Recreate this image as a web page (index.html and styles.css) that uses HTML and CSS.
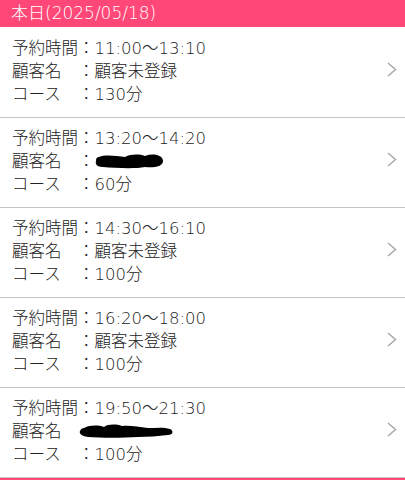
FILE: index.html
```html
<!DOCTYPE html>
<html lang="ja">
<head>
<meta charset="utf-8">
<link rel="stylesheet" href="styles.css">
</head>
<body>
<div class="header">本日(2025/05/18)</div>
<ul class="list">
  <li class="item">
    <div class="info">
      <span class="label">予約時間</span><span class="value">：11:00〜13:10</span>
      <span class="label">顧客名</span><span class="value">：顧客未登録</span>
      <span class="label">コース</span><span class="value">：130分</span>
    </div>
    <svg class="chev" viewBox="0 0 12 16"><path d="M2 1.5 L9.5 8 L2 14.5" /></svg>
  </li>
  <li class="item">
    <div class="info">
      <span class="label">予約時間</span><span class="value">：13:20〜14:20</span>
      <span class="label">顧客名</span><span class="value">：<svg class="blob blob-a" viewBox="0 0 70 16"><path d="M4 4 C10 1 22 3 30 4 C36 1 44 1 50 3 C58 0 68 2 68 8 C68 14 58 15 50 14 C40 16 20 15 8 14 C2 14 0 11 1 8 C1 5 2 4 4 4 Z"/></svg></span>
      <span class="label">コース</span><span class="value">：60分</span>
    </div>
    <svg class="chev" viewBox="0 0 12 16"><path d="M2 1.5 L9.5 8 L2 14.5" /></svg>
  </li>
  <li class="item">
    <div class="info">
      <span class="label">予約時間</span><span class="value">：14:30〜16:10</span>
      <span class="label">顧客名</span><span class="value">：顧客未登録</span>
      <span class="label">コース</span><span class="value">：100分</span>
    </div>
    <svg class="chev" viewBox="0 0 12 16"><path d="M2 1.5 L9.5 8 L2 14.5" /></svg>
  </li>
  <li class="item">
    <div class="info">
      <span class="label">予約時間</span><span class="value">：16:20〜18:00</span>
      <span class="label">顧客名</span><span class="value">：顧客未登録</span>
      <span class="label">コース</span><span class="value">：100分</span>
    </div>
    <svg class="chev" viewBox="0 0 12 16"><path d="M2 1.5 L9.5 8 L2 14.5" /></svg>
  </li>
  <li class="item">
    <div class="info">
      <span class="label">予約時間</span><span class="value">：19:50〜21:30</span>
      <span class="label">顧客名</span><span class="value"><svg class="blob blob-b" viewBox="0 0 96 16"><path d="M6 5 C12 2 20 2 26 4 C30 1 38 1 44 3 C52 2 60 4 70 5 C78 5 86 4 92 6 C96 8 95 12 90 12 C80 13 70 14 60 14 C44 15 24 15 10 14 C3 13 1 10 2 8 C3 6 4 5 6 5 Z"/></svg></span>
      <span class="label">コース</span><span class="value">：100分</span>
    </div>
    <svg class="chev" viewBox="0 0 12 16"><path d="M2 1.5 L9.5 8 L2 14.5" /></svg>
  </li>
</ul>
<div class="header next"></div>
</body>
</html>
```
FILE: styles.css
```css
html, body {
  margin: 0;
  padding: 0;
  background: #ffffff;
  font-family: "DejaVu Sans", "Noto Sans CJK JP", sans-serif;
  font-weight: 200;
  color: #222222;
}
.header {
  height: 27px;
  background: #ff4778;
  color: #ffffff;
  font-size: 17px;
  line-height: 27px;
  padding-left: 11px;
}
.list {
  list-style: none;
  margin: 0;
  padding: 0;
}
.item {
  height: 89px;
  border-bottom: 1px solid #c4c4c4;
  display: flex;
  align-items: center;
  padding: 0 7px 0 12px;
}
.item:first-child {
  border-top: 1px solid #ffffff;
}
.info {
  flex: 1;
  display: grid;
  grid-template-columns: 66px 1fr;
  font-size: 16.5px;
  line-height: 23px;
  margin-top: -3px;
}
.value {
  display: flex;
  align-items: center;
}
.blob {
  fill: #000000;
  height: 16px;
}
.blob-a {
  width: 70px;
}
.blob-b {
  width: 96px;
}
.chev {
  width: 12px;
  height: 17px;
  margin-top: -7px;
  fill: none;
  stroke: #a8a8a8;
  stroke-width: 1.5;
}
```
